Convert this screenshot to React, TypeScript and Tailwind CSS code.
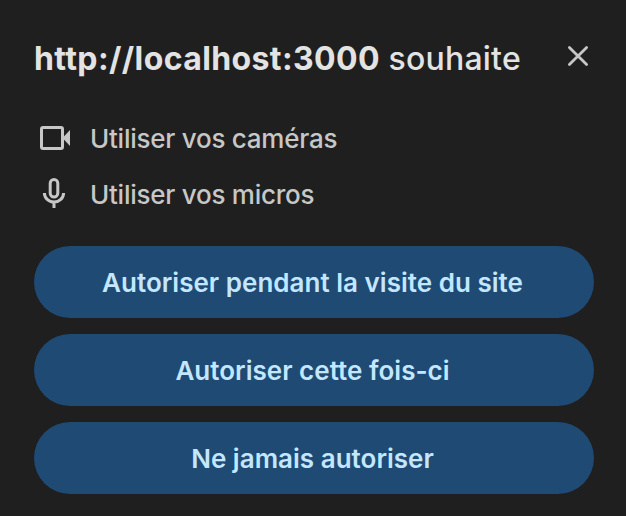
const actions = ["Autoriser pendant la visite du site", "Autoriser cette fois-ci", "Ne jamais autoriser"];

function CameraIcon() {
  return (
    <svg width="32" height="32" viewBox="0 0 32 32" fill="none" className="shrink-0">
      <rect x="3.5" y="4.5" width="21" height="21" rx="1.5" stroke="#c7c7c7" strokeWidth="3" />
      <path d="M24.5 15l7.5-8v16l-7.5-8z" fill="#c7c7c7" />
    </svg>
  );
}

function MicIcon() {
  return (
    <svg width="32" height="32" viewBox="0 0 32 32" fill="none" stroke="#c7c7c7" strokeWidth="3" className="shrink-0 overflow-visible">
      <rect x="12.2" y="0.5" width="7.6" height="17.6" rx="3.8" />
      <path d="M6.4 14a9.6 9.1 0 0 0 19.2 0M16 23v6" />
    </svg>
  );
}

export default function App() {
  return (
    <main className="h-[516px] w-[626px] overflow-hidden bg-[#1f1f1f] px-[34px] pt-[39px] font-['Inter',sans-serif] text-[#c7c7c7]">
      <header className="flex h-10 items-center justify-between text-[#e3e3e3]">
        <h1 className="whitespace-nowrap text-[32px] font-medium leading-10"><strong className="font-bold tracking-[0.38px]">http://localhost:3000</strong><span className="tracking-[0.2px]"> souhaite</span></h1>
        <button aria-label="Fermer" className="mr-[2px] mb-[6px]">
          <svg width="24" height="24" viewBox="0 0 24 24" stroke="#c7c7c7" strokeWidth="2.8" strokeLinecap="round"><path d="M3.4 3.4l17.2 17.2M20.6 3.4L3.4 20.6" /></svg>
        </button>
      </header>
      <ul className="mt-8 text-[26px] font-[450] tracking-[-0.25px]">
        <li className="flex h-14 items-center gap-5 pl-1"><CameraIcon /><span className="pb-px">Utiliser vos caméras</span></li>
        <li className="flex h-14 items-center gap-5 pl-1"><MicIcon /><span className="pb-px">Utiliser vos micros</span></li>
      </ul>
      <div className="mt-[23px] flex w-[560px] flex-col gap-4">
        {actions.map((a) => <button key={a} className="h-[72px] rounded-full bg-[#1f4a74] pr-[3px] text-[26px] font-[560] tracking-[0.02px] text-[#c2e7ff]">{a}</button>)}
      </div>
    </main>
  );
}
